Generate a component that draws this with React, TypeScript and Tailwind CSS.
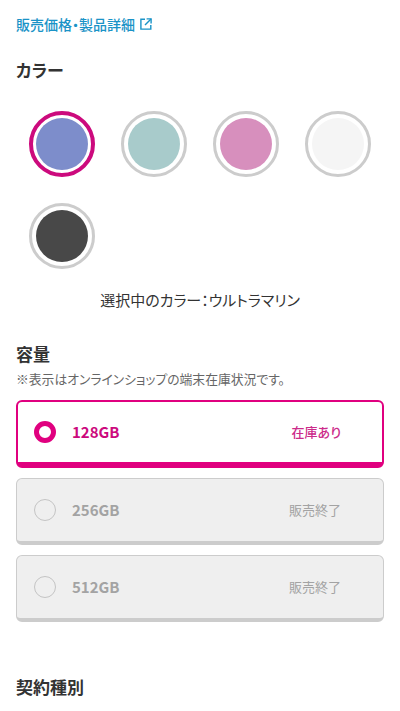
import React from 'react';

const colors = [
  { name: 'ウルトラマリン', swatch: 'bg-[#7d8dcb]', ring: 'border-[4px] border-[#cc0a7d]' },
  { name: 'ミント', swatch: 'bg-[#a8cbcb]', ring: 'border-[3px] border-[#cccccc]' },
  { name: 'ピンク', swatch: 'bg-[#d78fbd]', ring: 'border-[3px] border-[#cccccc]' },
  { name: 'ホワイト', swatch: 'bg-[#f5f5f5]', ring: 'border-[3px] border-[#cccccc]' },
  { name: 'ブラック', swatch: 'bg-[#484848]', ring: 'border-[3px] border-[#cccccc]' },
];

const capacities = [
  { label: '128GB', status: '在庫あり', selected: true },
  { label: '256GB', status: '販売終了', selected: false },
  { label: '512GB', status: '販売終了', selected: false },
];

const App: React.FC = () => {
  return (
    <div className="w-[400px] h-[711px] overflow-hidden bg-white px-4 pt-[15px] text-[#333333] [font-feature-settings:'palt'] font-['Noto_Sans_CJK_JP','Noto_Sans',sans-serif]">
      {/* Link */}
      <a className="flex items-center h-[18px] text-[14px] font-medium text-[#1a93c7]">
        販売価格・製品詳細
        <svg className="ml-[5px] w-[12px] h-[12px]" viewBox="0 0 12 12" fill="none" stroke="currentColor" strokeWidth="1.4">
          <path d="M5 1.2H.9v9.9h9.9V7" />
          <path d="M6.6 .9h4.5v4.5" />
          <path d="M11 1 5 7" />
        </svg>
      </a>

      {/* Color */}
      <h2 className="mt-[25px] h-[24px] leading-[24px] text-[17px] font-bold">カラー</h2>
      <div className="mt-[16px] grid grid-cols-4">
        {colors.map((c) => (
          <div key={c.name} className="h-[92px] flex items-center justify-center">
            <div className={`w-[66px] h-[66px] rounded-full ${c.ring} flex items-center justify-center`}>
              <div className={`w-[52px] h-[52px] shrink-0 rounded-full ${c.swatch}`} />
            </div>
          </div>
        ))}
      </div>
      <p className="mt-[7px] h-[22px] leading-[22px] text-center text-[15px]">選択中のカラー：ウルトラマリン</p>

      {/* Capacity */}
      <h2 className="mt-[31px] h-[24px] leading-[24px] text-[17px] font-bold">容量</h2>
      <p className="mt-[4px] h-[18px] leading-[18px] text-[12.8px] text-[#666666]">※表示はオンラインショップの端末在庫状況です。</p>
      <div className="mt-[12px] flex flex-col gap-[10px]">
        {capacities.map((c) => (
          <div
            key={c.label}
            className={
              c.selected
                ? 'h-[68px] rounded-[6px] border-2 border-b-[6px] border-[#e0007f] bg-white flex items-center pl-[16px] pr-[41px]'
                : 'h-[67px] rounded-[6px] border border-b-[4px] border-[#cccccc] bg-[#efefef] flex items-center pl-[17px] pr-[42px]'
            }
          >
            {c.selected ? (
              <span className="w-[22px] h-[22px] rounded-full border-[5px] border-[#e0007f] bg-white" />
            ) : (
              <span className="w-[22px] h-[22px] rounded-full border border-[#c4c4c4] bg-[#efefef]" />
            )}
            <span className={`ml-[16px] text-[15px] font-bold ${c.selected ? 'text-[#cc0a7d]' : 'text-[#a3a3a3]'}`}>
              {c.label}
            </span>
            <span className={`ml-auto text-[13px] ${c.selected ? 'font-medium text-[#cc2b8a]' : 'text-[#a3a3a3]'}`}>
              {c.status}
            </span>
          </div>
        ))}
      </div>

      {/* Contract type */}
      <h2 className="mt-[53px] h-[24px] leading-[24px] text-[17px] font-bold">契約種別</h2>
    </div>
  );
};

export default App;
